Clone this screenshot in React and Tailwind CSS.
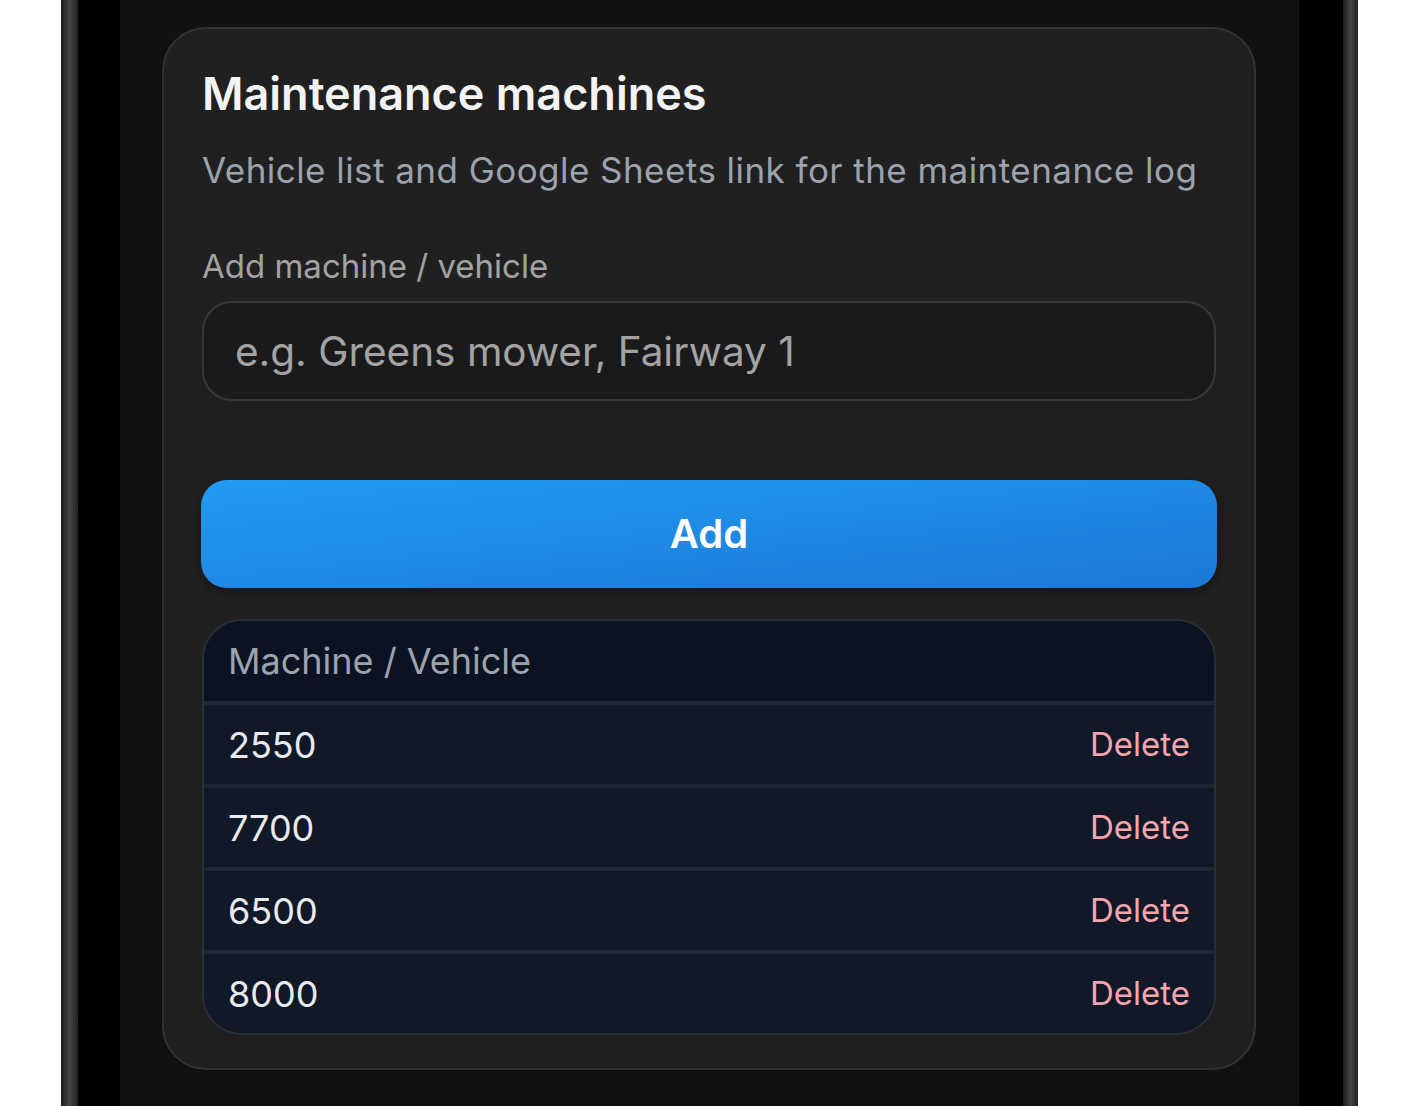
const machines = ['2550', '7700', '6500', '8000']

function Rail({ className }) {
  return (
    <div
      className={`h-full bg-gradient-to-r from-[#1c1c1c] via-[#474747] to-[#202020] ${className}`}
    />
  )
}

export default function App() {
  return (
    <div
      className="flex h-[1106px] w-full overflow-hidden bg-white pl-[61px]"
      style={{ fontFamily: 'Inter, "Noto Sans", sans-serif' }}
    >
      <div className="flex h-full">
        <Rail className="w-[17px]" />
        <div className="h-full w-[42px] bg-black" />
        <main className="h-full w-[1179px] bg-[#111111] px-[42px] pt-[27px]">
          <section className="h-[1043px] w-[1094px] rounded-[44px] border-2 border-[#333333] bg-[#202020] px-[38px] pt-[38px]">
            <h1 className="text-[45px] font-semibold leading-[53px] text-[#f3f3f3]">
              Maintenance machines
            </h1>
            <p className="mt-[28px] text-[35px] leading-[44px] tracking-[0.45px] text-[#9ca3af]">
              Vehicle list and Google Sheets link for the maintenance log
            </p>

            <label className="mt-[54px] block text-[33px] leading-[40px] text-[#a3a3a3]">
              Add machine / vehicle
            </label>
            <input
              placeholder="e.g. Greens mower, Fairway 1"
              className="mt-[15px] h-[100px] w-full rounded-[30px] border-2 border-[#383838] bg-[#1a1a1a] px-[31px] text-[40.5px] text-white outline-none placeholder:text-[#a3a3a3]"
            />

            <button className="mt-[79px] flex h-[108px] w-[1016px] -ml-px items-center justify-center rounded-[26px] bg-gradient-to-br from-[#229bf3] to-[#1b78d4] text-[40px] font-semibold text-white shadow-[0_4px_14px_rgba(0,0,0,0.35)]">
              Add
            </button>

            <div className="mt-[31px] overflow-hidden rounded-[40px] border-2 border-[#2a2f37] bg-[#111827]">
              <div className="flex h-[80px] items-center bg-[#0b1221] px-[24px] text-[36px] text-[#9ca3af]">
                Machine / Vehicle
              </div>
              {machines.map((m) => (
                <div
                  key={m}
                  className="flex h-[83px] items-center justify-between border-t-4 border-[#1f2733] bg-[#111827] px-[24px]"
                >
                  <span className="text-[36px] text-[#e8eaee]">{m}</span>
                  <button className="text-[33px] text-[#f6a5ad]">Delete</button>
                </div>
              ))}
            </div>
          </section>
        </main>
        <div className="h-full w-[44px] bg-black" />
        <Rail className="w-[15px]" />
      </div>
    </div>
  )
}
